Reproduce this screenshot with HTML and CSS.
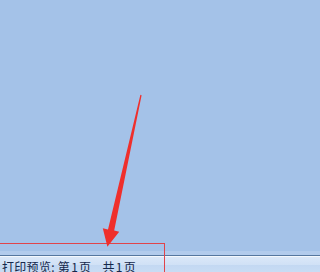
FILE: index.html
```html
<!DOCTYPE html>
<html>
<head>
<meta charset="utf-8">
<link rel="stylesheet" href="styles.css">
</head>
<body>
<div class="window">
  <div class="canvas"></div>
  <div class="statusbar">
    <span class="status-text">打印预览: 第<span class="num">1</span>页<span class="gap"></span>共<span class="num">1</span>页</span>
  </div>
  <div class="highlight"></div>
  <svg class="arrow" width="292" height="272" viewBox="0 0 292 272">
    <polygon points="140.4,94.8 141.6,95.2 114.2,230.6 119.2,231.8 107.4,246.8 102.8,228.2 108.0,229.4" fill="#ef2f2c"/>
  </svg>
</div>
</body>
</html>
```
FILE: styles.css
```css
html, body {
  margin: 0;
  padding: 0;
  background: #a4c2e8;
}
body {
  height: 272px;
  overflow: hidden;
  font-family: "Noto Sans CJK SC", "Noto Sans", sans-serif;
}
.window {
  position: relative;
  width: 100%;
  height: 272px;
  display: flex;
  flex-direction: column;
  background: #a4c2e8;
}
.canvas {
  flex: 1;
  background: linear-gradient(to bottom, #a4c2e8 0, #a4c2e8 calc(100% - 4px), #b2cbec calc(100% - 4px), #b2cbec 100%);
}
.statusbar {
  height: 16px;
  border-top: 1px solid #56779f;
  box-shadow: inset 0 1px 0 #f4f8fd;
  background: linear-gradient(to bottom, #dce8f8 0, #d0e1f6 55%, #c3d8f2 56%, #c8dcf4 100%);
  display: flex;
  align-items: flex-start;
  padding-left: 2px;
}
.status-text {
  font-size: 12px;
  line-height: 16px;
  margin-top: 3px;
  color: #15284b;
  white-space: pre;
  letter-spacing: 0.3px;
}
.num {
  margin: 0 1px;
}
.gap {
  display: inline-block;
  width: 11px;
}
.highlight {
  position: absolute;
  left: 0;
  top: 243px;
  width: 164px;
  height: 40px;
  border: 1px solid #e0444a;
  border-left: none;
}
.arrow {
  position: absolute;
  left: 0;
  top: 0;
}
```
